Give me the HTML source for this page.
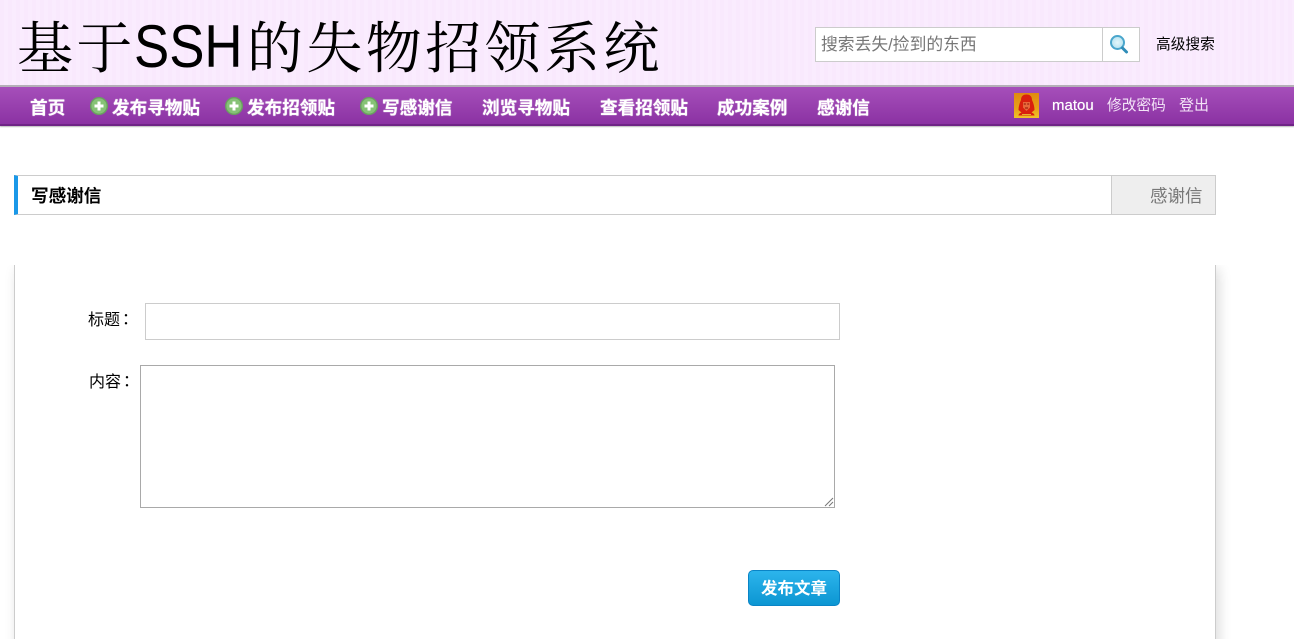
<!DOCTYPE html>
<html lang="zh"><head><meta charset="utf-8"><title>写感谢信</title>
<style>
html,body{margin:0;padding:0;background:#fff;width:1294px;height:639px;overflow:hidden}
body{position:relative;font-family:"Liberation Sans","Noto Sans CJK SC",sans-serif;color:#000}
.a{position:absolute;white-space:nowrap}
#hd{left:0;top:0;width:1294px;height:86px;background:repeating-linear-gradient(90deg,#f9e9fd 0 4px,#faecfe 4px 8px)}
.t{font-family:"Noto Serif CJK SC",serif;font-size:56px;letter-spacing:3.4px;line-height:80px;top:5px}
#nav{left:0;top:85px;width:1294px;height:41px;box-sizing:border-box;border-top:2px solid #b5b0b8;border-bottom:2px solid #6f2486;background:linear-gradient(#a64fba,#8b32a3);box-shadow:0 1px 1px #bbb}
.n{top:97px;font-size:17.6px;line-height:22px;font-weight:bold;color:#fff;text-shadow:0 0 1px #fff}
.s{top:96px;font-size:14.7px;line-height:20px;color:#fff}
.plus{width:18px;height:18px;top:97px}
.c{font-family:"Noto Sans CJK TC",sans-serif;margin-left:-2px}
</style></head><body>
<div class="a" id="hd"></div>
<div class="a t" style="left:17px">基于</div>
<div class="a t" style="left:134px;font-family:'Liberation Sans',sans-serif;font-size:60px;letter-spacing:0;top:7px;transform:scaleX(.88);transform-origin:0 0">SSH</div>
<div class="a t" style="left:247px">的失物招领系统</div>

<div class="a" style="left:815px;top:27px;width:325px;height:35px;box-sizing:border-box;border:1px solid #ccc;background:#fff"></div>
<div class="a" style="left:1102px;top:27px;width:1px;height:35px;background:#ccc"></div>
<div class="a" style="left:821px;top:33px;font-size:16.8px;line-height:24px;color:#777">搜索丢失/捡到的东西</div>
<svg class="a" style="left:1107px;top:32px" width="24" height="24" viewBox="0 0 24 24"><defs><radialGradient id="m"><stop offset="0" stop-color="#e4f7fb"/><stop offset="1" stop-color="#b6e2f0"/></radialGradient></defs><circle cx="10.5" cy="10.5" r="6.500" fill="url(#m)" stroke="#4aa6cc" stroke-width="2"/><path d="M15.500 16l4 4" stroke="#2f8db8" stroke-width="3" stroke-linecap="round"/></svg>
<div class="a" style="left:1156px;top:35px;font-size:14.7px;line-height:20px">高级搜索</div>

<div class="a" id="nav"></div>
<div class="a n" style="left:30px">首页</div>
<svg class="a plus" style="left:90px" viewBox="0 0 18 18"><circle cx="9" cy="9" r="8.300" fill="#86c276" stroke="#69a05f" stroke-width="1.400"/><path d="M9 4.500v9M4.500 9h9" stroke="#fff" stroke-width="3"/></svg>
<div class="a n" style="left:112px">发布寻物贴</div>
<svg class="a plus" style="left:225px" viewBox="0 0 18 18"><circle cx="9" cy="9" r="8.300" fill="#86c276" stroke="#69a05f" stroke-width="1.400"/><path d="M9 4.500v9M4.500 9h9" stroke="#fff" stroke-width="3"/></svg>
<div class="a n" style="left:247px">发布招领贴</div>
<svg class="a plus" style="left:360px" viewBox="0 0 18 18"><circle cx="9" cy="9" r="8.300" fill="#86c276" stroke="#69a05f" stroke-width="1.400"/><path d="M9 4.500v9M4.500 9h9" stroke="#fff" stroke-width="3"/></svg>
<div class="a n" style="left:382px">写感谢信</div>
<div class="a n" style="left:482px">浏览寻物贴</div>
<div class="a n" style="left:600px">查看招领贴</div>
<div class="a n" style="left:717px">成功案例</div>
<div class="a n" style="left:817px">感谢信</div>

<svg class="a" style="left:1014px;top:93px" width="25" height="25" viewBox="0 0 25 25"><defs><linearGradient id="g" x1="0" y1="0" x2="0" y2="1"><stop offset="0" stop-color="#e08a10"/><stop offset=".6" stop-color="#e8a018"/><stop offset="1" stop-color="#f0c428"/></linearGradient></defs><rect width="25" height="25" fill="url(#g)"/><path d="M7 7C7 3 9.500 1.500 12.500 1.500S18 3 18 7c1.500 3 2.500 7 2.500 10l-3 2.500c1.500.5 3 1.500 3 3H4.500c0-1.500 1.500-2.500 3-3l-3-2.500c0-3 1-7 2.500-10z" fill="#d9200e"/><path d="M9 9h7v5.500L12.500 18 9 14.500z" fill="#e8683a"/><path d="M9.800 11h2M13.200 11h2M11 15h3" stroke="#8a1408" stroke-width="1"/><path d="M8 21.500h9" stroke="#e8b030" stroke-width="1"/></svg>
<div class="a s" style="left:1052px;top:96px;font-size:15px;text-shadow:0 0 .6px #fff">matou</div>
<div class="a s" style="left:1107px;color:#f3e4f7">修改密码</div>
<div class="a s" style="left:1179px;color:#f3e4f7;font-size:15px">登出</div>

<div class="a" style="left:14px;top:175px;width:1202px;height:40px;box-sizing:border-box;border:1px solid #ccc;border-left:4px solid #1a98e8;background:#fff"></div>
<div class="a" style="left:1111px;top:176px;width:104px;height:38px;border-left:1px solid #ccc;background:#eee;box-sizing:border-box"></div>
<div class="a" style="left:31px;top:185px;font-size:17.6px;line-height:22px;font-weight:bold">写感谢信</div>
<div class="a" style="left:1150px;top:185px;font-size:17.500px;line-height:22px;color:#777">感谢信</div>

<div class="a" style="left:14px;top:265px;width:1202px;height:400px;box-sizing:border-box;border:1px solid #ccc;border-top:0;background:#fff;box-shadow:3px 4px 12px rgba(0,0,0,.14);clip-path:inset(0 -20px -20px -20px)"></div>
<div class="a" style="left:88px;top:307px;font-size:16px;line-height:22px">标题<span class="c" lang="zh-TW">：</span></div>
<div class="a" style="left:145px;top:303px;width:695px;height:37px;box-sizing:border-box;border:1px solid #ccc;background:#fff"></div>
<div class="a" style="left:89px;top:369px;font-size:16px;line-height:22px">内容<span class="c" lang="zh-TW">：</span></div>
<div class="a" style="left:140px;top:365px;width:695px;height:143px;box-sizing:border-box;border:1px solid #a9a9a9;background:#fff"></div>
<svg class="a" style="left:824px;top:497px" width="10" height="10" viewBox="0 0 10 10"><path d="M1 9L9 1M5 9l4-4" stroke="#777" stroke-width="1"/></svg>
<div class="a" style="left:748px;top:570px;width:92px;height:36px;box-sizing:border-box;border:1px solid #0a84c6;border-radius:5px;background:linear-gradient(#2cb4ec,#0c96d2);color:#fff;font-weight:bold;font-size:16.500px;line-height:36px;text-align:center">发布文章</div>
</body></html>
